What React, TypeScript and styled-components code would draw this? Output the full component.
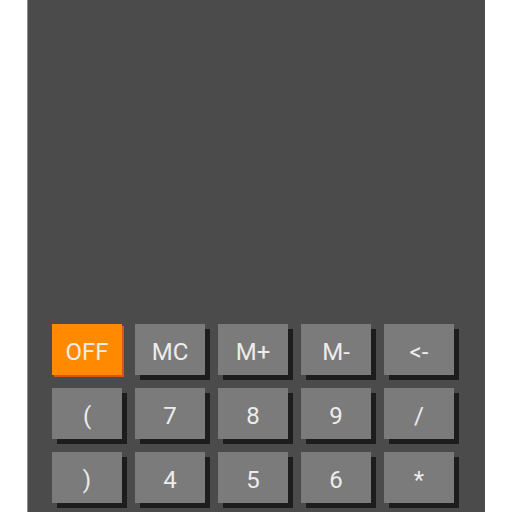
import styled, { createGlobalStyle } from "styled-components";

const GlobalStyle = createGlobalStyle`
  html, body {
    margin: 0;
    padding: 0;
    background: #ffffff;
    overflow: hidden;
  }
`;

const Page = styled.div`
  height: 100vh;
  padding-left: 27px;
  display: flex;
`;

const Panel = styled.div`
  width: 458px;
  height: 100%;
  background: #4a4b4a;
  border-left: 1px solid #8c8c8c;
  box-sizing: border-box;
  display: flex;
  flex-direction: column;
  overflow: hidden;
`;

const Display = styled.div`
  flex: none;
  height: 324px;
`;

const Keypad = styled.div`
  display: grid;
  grid-template-columns: repeat(5, 70px);
  grid-auto-rows: 51px;
  column-gap: 13px;
  row-gap: 13px;
  padding-left: 24px;
`;

const Key = styled.button<{ $accent?: boolean }>`
  border: none;
  margin: 0;
  padding: 4px 0 0 0;
  font-family: Roboto, "Noto Sans", sans-serif;
  font-size: 24px;
  color: #ececec;
  display: flex;
  align-items: center;
  justify-content: center;
  background: ${(p) => (p.$accent ? "#ff8a00" : "#7b7b7b")};
  box-shadow: ${(p) =>
    p.$accent ? "2px 2px 0 #d9541a" : "5px 5px 0 #1d1d1d"};
`;

const keys = [
  "OFF", "MC", "M+", "M-", "<-",
  "(", "7", "8", "9", "/",
  ")", "4", "5", "6", "*",
];

export default function App() {
  return (
    <>
      <GlobalStyle />
      <Page>
        <Panel>
          <Display />
          <Keypad>
            {keys.map((k) => (
              <Key key={k} $accent={k === "OFF"}>
                {k}
              </Key>
            ))}
          </Keypad>
        </Panel>
      </Page>
    </>
  );
}
